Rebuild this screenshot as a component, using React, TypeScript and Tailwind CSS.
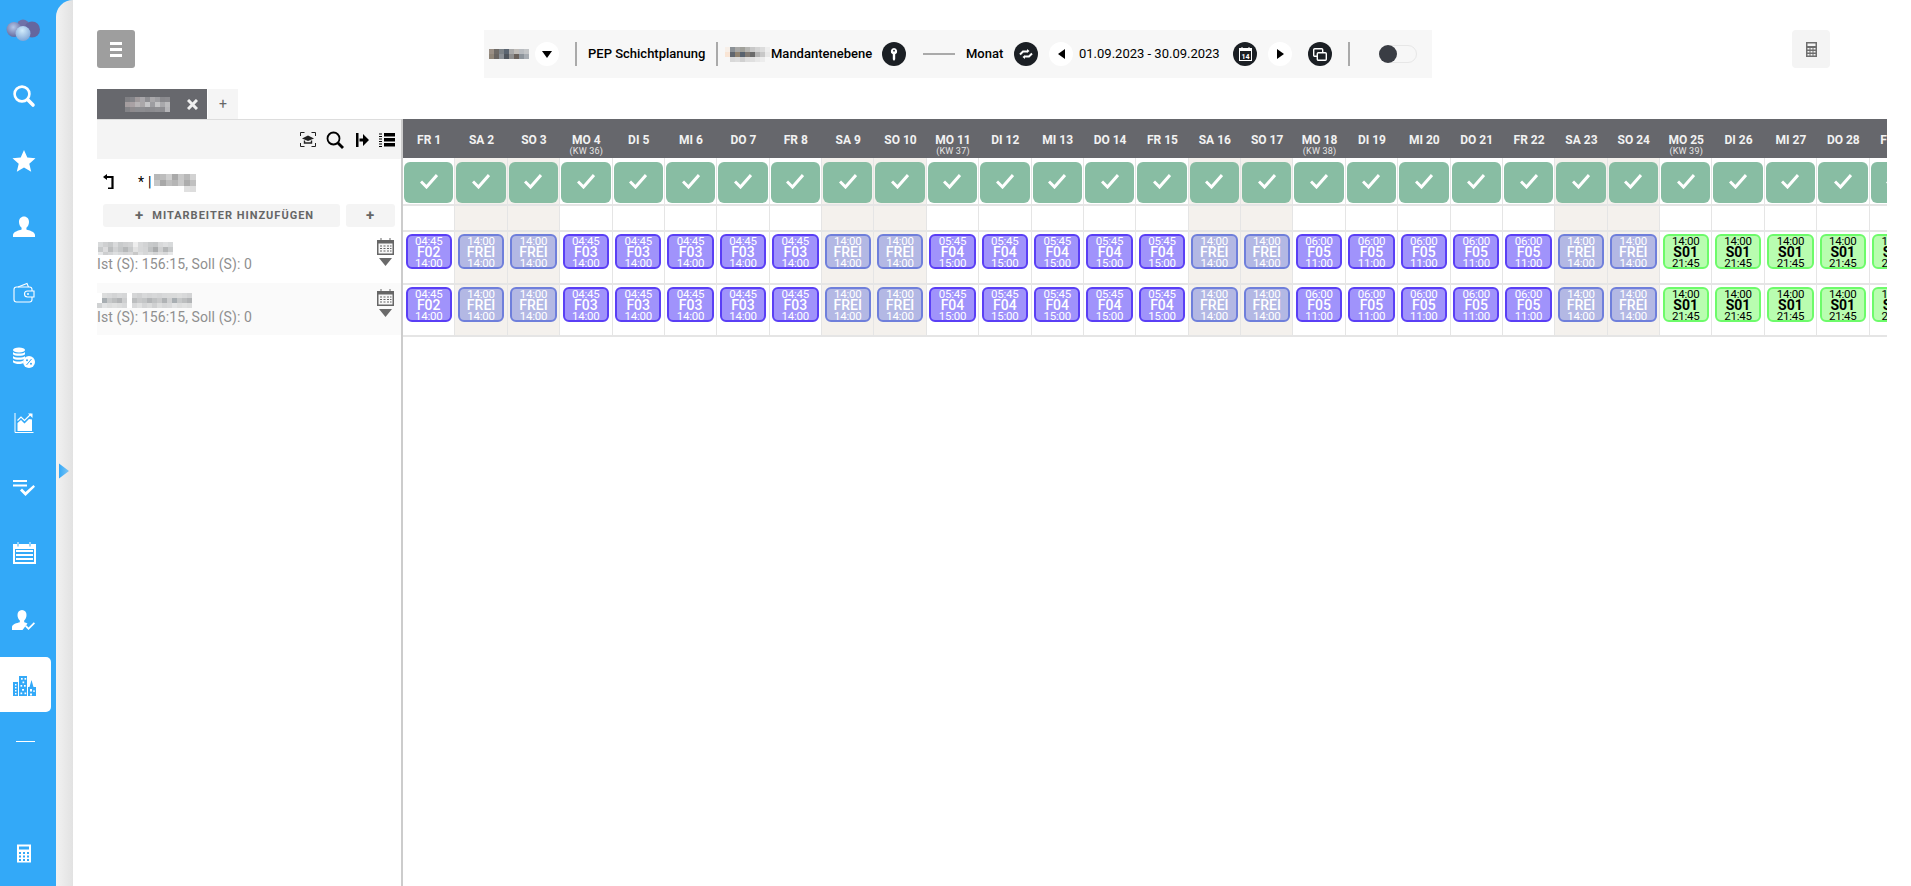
import React from 'react';

type Shift = { from: string; code: string; to: string; kind: 'early' | 'free' | 'late' };

const names = ['FR', 'SA', 'SO', 'MO', 'DI', 'MI', 'DO'];

const shiftFor = (day: number): Shift => {
  const weekday = names[(day - 1) % 7];
  if (weekday === 'SA' || weekday === 'SO') return { from: '14:00', code: 'FREI', to: '14:00', kind: 'free' };
  if (day === 1) return { from: '04:45', code: 'F02', to: '14:00', kind: 'early' };
  if (day <= 8) return { from: '04:45', code: 'F03', to: '14:00', kind: 'early' };
  if (day <= 15) return { from: '05:45', code: 'F04', to: '15:00', kind: 'early' };
  if (day <= 22) return { from: '06:00', code: 'F05', to: '11:00', kind: 'early' };
  return { from: '14:00', code: 'S01', to: '21:45', kind: 'late' };
};

const days = Array.from({ length: 29 }, (_, i) => {
  const day = i + 1;
  const weekday = names[i % 7];
  const kw: Record<number, string> = { 4: '(KW 36)', 11: '(KW 37)', 18: '(KW 38)', 25: '(KW 39)' };
  return { day, label: `${weekday} ${day}`, kw: kw[day], weekend: weekday === 'SA' || weekday === 'SO', shift: shiftFor(day) };
});

// pixelated names from the screenshot
const Mosaic = ({ rows, cell, className }: { rows: string[][]; cell: number; className?: string }) => (
  <svg className={className} width={rows[0].length * cell} height={rows.length * cell}>
    {rows.map((row, y) =>
      row.map((fill, x) => <rect key={`${x}-${y}`} x={x * cell} y={y * cell} width={cell} height={cell} fill={fill} />)
    )}
  </svg>
);

const Logo = () => (
  <svg width="36" height="26" viewBox="0 0 36 26">
    <defs>
      <radialGradient id="ball" cx="45%" cy="35%" r="70%">
        <stop offset="0%" stopColor="#b4c8ea" />
        <stop offset="100%" stopColor="#5f6399" />
      </radialGradient>
      <radialGradient id="ballFront" cx="45%" cy="30%" r="70%">
        <stop offset="0%" stopColor="#d2ecfb" />
        <stop offset="100%" stopColor="#7fa6d8" />
      </radialGradient>
    </defs>
    <circle cx="17" cy="6.5" r="6" fill="#6f71a8" />
    <circle cx="26" cy="10.5" r="8" fill="#65669e" />
    <circle cx="8" cy="10.5" r="7.5" fill="url(#ball)" />
    <circle cx="17" cy="14.5" r="7.5" fill="url(#ballFront)" />
  </svg>
);

const SideIcon = ({ name }: { name: string }) => {
  if (name === 'search')
    return (
      <svg width="24" height="24" viewBox="0 0 24 24" fill="none" stroke="#fff">
        <circle cx="10" cy="10" r="7.4" strokeWidth="2.6" />
        <path d="M15.8 15.8 21 21" strokeWidth="3.6" strokeLinecap="round" />
      </svg>
    );
  if (name === 'star')
    return (
      <svg width="24" height="24" viewBox="0 0 24 24" fill="#fff">
        <path d="M12 1l3.3 7.6 8.2.7-6.2 5.4 1.9 8.1L12 18.6l-7.2 4.2 1.9-8.1L.5 9.3l8.2-.7z" />
      </svg>
    );
  if (name === 'user')
    return (
      <svg width="24" height="24" viewBox="0 0 24 24" fill="#fff">
        <path d="M12 1.5c3 0 5 2.3 5 5.5 0 2.6-1.2 4.8-2.6 5.8v1.6c3 1 8.6 2.2 8.6 5.6v2H1v-2c0-3.4 5.6-4.6 8.6-5.6v-1.6C8.2 11.8 7 9.6 7 7c0-3.2 2-5.5 5-5.5z" />
      </svg>
    );
  if (name === 'wallet')
    return (
      <svg width="22" height="22" viewBox="0 0 22 22" fill="none" stroke="#fff" strokeWidth="1.1">
        <rect x="1" y="5" width="18" height="15" rx="2.5" />
        <path d="M5 5l9-3.5L15.500 5" />
        <path d="M21 9h-6.500a2.500 2.500 0 0 0 0 6H21z" fill="#33a9f8" />
        <circle cx="15" cy="12" r="1" fill="#fff" stroke="none" />
      </svg>
    );
  if (name === 'coins')
    return (
      <svg width="24" height="22" viewBox="0 0 24 22" fill="#fff">
        <ellipse cx="7" cy="3" rx="6" ry="2.5" />
        <path d="M1 5c1.5 2 10.500 2 12 0v2.200c-1.500 2-10.500 2-12 0zM1 9c1.500 2 10.500 2 12 0v2.200c-1.500 2-10.500 2-12 0zM1 13c1.500 2 9 2 10 .5v2.700c-2 1.300-8.500 1-10-1z" />
        <circle cx="17" cy="15" r="6" />
        <path d="M14.500 18l5-6" stroke="#33a9f8" strokeWidth="1" />
        <circle cx="15" cy="13.200" r="1" fill="#33a9f8" />
        <circle cx="19" cy="16.800" r="1" fill="#33a9f8" />
      </svg>
    );
  if (name === 'chart')
    return (
      <svg width="20" height="22" viewBox="0 0 20 22" fill="none" stroke="#fff">
        <path d="M1 1v19.500h18.500" strokeWidth="1" />
        <path d="M3.500 19V11l3.500-3 3.500 3.500L15 7l3 .5V19z" fill="#fff" stroke="none" />
        <path d="M3 9.500l4-3.500 3.500 3.500L17 2.500" strokeWidth="1.400" stroke="#33a9f8" />
        <path d="M3.500 8.500 7 5l3.500 3.500L17 2" strokeWidth="1.200" />
        <path d="M14 1.500h4.500V6z" fill="#fff" stroke="none" />
      </svg>
    );
  if (name === 'tasks')
    return (
      <svg width="24" height="18" viewBox="0 0 24 18" fill="#fff">
        <rect x="1" y="0" width="14" height="2" />
        <rect x="1" y="4.500" width="14" height="2" />
        <path d="M8 10.500l2-2 3.500 3.500L21.500 5l1.500 1.800L13.500 16z" />
      </svg>
    );
  if (name === 'calendar')
    return (
      <svg width="23" height="22" viewBox="0 0 23 22" fill="#fff">
        <path d="M0 2h4V0h2v2h10V0h2v2h5v20H0z" />
        <rect x="2" y="7" width="19" height="13" fill="#33a9f8" />
        <rect x="3" y="8" width="17" height="2" />
        <rect x="3" y="12" width="17" height="2" />
        <rect x="3" y="16" width="17" height="2" />
        <rect x="4.500" y="0" width="1" height="4.500" fill="#33a9f8" />
        <rect x="16.500" y="0" width="1" height="4.500" fill="#33a9f8" />
      </svg>
    );
  if (name === 'userCheck')
    return (
      <svg width="24" height="22" viewBox="0 0 24 22" fill="#fff">
        <path d="M10 0c3 0 4.500 2.200 4.500 5 0 2.300-1 4.300-2.300 5.400v1.800c1 .3 2.200.7 3.300 1.300L10.500 20H0v-3c0-3 5-4 7.800-4.800v-1.800C6.500 9.300 5.500 7.300 5.500 5 5.500 2.200 7 0 10 0z" />
        <path d="M13 16.500l1.300-1.300 2.200 2.200 5.300-5.200 1.200 1.200-6.500 6.600z" />
      </svg>
    );
  if (name === 'city')
    return (
      <svg width="23" height="20" viewBox="0 0 23 20" fill="#33a9f8">
        <path d="M0 6h5v14H0zM6 0h8v20H6zM15 11h1.500l2-7 2 7H23v9h-8z" />
        <g fill="#fff">
          <rect x="2" y="8" width="1.500" height="1.500" /><rect x="2" y="11" width="1.500" height="1.500" />
          <rect x="2" y="14" width="1.500" height="1.500" /><rect x="2" y="17" width="1.500" height="1.500" />
          <rect x="8" y="2" width="1.700" height="1.700" /><rect x="11.500" y="2" width="1.700" height="1.700" />
          <rect x="9.500" y="5.500" width="1.700" height="1.700" /><rect x="7.500" y="9" width="1.700" height="1.700" />
          <rect x="11" y="9" width="1.700" height="1.700" /><rect x="9" y="13" width="2" height="1.700" />
          <rect x="7.500" y="16.500" width="1.700" height="1.700" /><rect x="11.500" y="16.500" width="1.700" height="1.700" />
          <rect x="17" y="13" width="2" height="2.500" /><rect x="17" y="17.500" width="2" height="2" />
          <rect x="20" y="14.500" width="2" height="1.200" />
        </g>
      </svg>
    );
  if (name === 'dash') return <div className="h-px w-[19px] bg-white" />;
  if (name === 'calc')
    return (
      <svg width="14" height="19" viewBox="0 0 14 18" fill="#fff">
        <path d="M0 0h14v18H0zM2 2v3h10V2zM2 7.500v2h2v-2zm4 0v2h2v-2zm4 0v2h2v-2zM2 11v2h2v-2zm4 0v2h2v-2zm4 0v2h2v-2zM2 14.500v2h2v-2zm4 0v2h2v-2zm4 0v2h2v-2z" fillRule="evenodd" />
      </svg>
    );
  return null;
};

const sideItems = [
  { name: 'search', box: 'h-[65px]' },
  { name: 'star', box: 'h-[66px]' },
  { name: 'user', box: 'h-[66px]' },
  { name: 'wallet', box: 'h-[65px]' },
  { name: 'coins', box: 'h-[65px]' },
  { name: 'chart', box: 'h-[66px]' },
  { name: 'tasks', box: 'h-[66px]' },
  { name: 'calendar', box: 'h-[62px]' },
  { name: 'userCheck', box: 'h-[73px]' },
];

const Sidebar = () => (
  <aside className="flex h-full w-14 shrink-0 flex-col">
    <div className="flex h-[63px] items-center justify-center pr-[8px]">
      <Logo />
    </div>
    {sideItems.map((item) => (
      <div key={item.name} className={`flex items-center justify-center pr-[8px] ${item.box}`}>
        <SideIcon name={item.name} />
      </div>
    ))}
    <div className="flex h-[55px] w-[51px] items-center justify-center rounded-r-[5px] bg-white pt-[2px] pr-[3px]">
      <SideIcon name="city" />
    </div>
    <div className="flex h-[58px] items-center justify-center pl-[1px] pr-[7px]">
      <SideIcon name="dash" />
    </div>
    <div className="mt-auto flex h-[66px] items-center justify-center pr-[8px]">
      <SideIcon name="calc" />
    </div>
  </aside>
);

const Round = ({ dark = false, children }: { dark?: boolean; children: React.ReactNode }) => (
  <div className={`flex h-6 w-6 shrink-0 items-center justify-center rounded-full ${dark ? 'bg-[#1b1f24]' : 'bg-white'}`}>
    {children}
  </div>
);

const Separator = () => <div className="h-6 w-[2px] shrink-0 bg-[#aaaaaa]" />;

const Arrow = ({ dir }: { dir: 'down' | 'left' | 'right' }) => {
  if (dir === 'down') return <svg width="10" height="7" viewBox="0 0 10 7"><path d="M0 0h10L5 7z" fill="#000" /></svg>;
  if (dir === 'left') return <svg width="7" height="10" viewBox="0 0 7 10"><path d="M7 0v10L0 5z" fill="#000" /></svg>;
  return <svg width="7" height="10" viewBox="0 0 7 10"><path d="M0 0v10l7-5z" fill="#000" /></svg>;
};

const TopBar = () => (
  <div className="flex h-12 w-[948px] shrink-0 items-center bg-[#f7f7f7] text-[13px] font-medium text-black">
    <Mosaic
      className="ml-[5px]"
      cell={5}
      rows={[
        ['#9a8f85', '#6e6a66', '#7c8287', '#5a6470', '#a9a9a9', '#c0bdb9', '#b9bcc0', '#c3c5c7'],
        ['#8f8578', '#696562', '#8b9096', '#50565e', '#8f8f8f', '#6a625c', '#8d949b', '#a8adb3'],
      ]}
    />
    <div className="ml-[6px]">
      <Round><Arrow dir="down" /></Round>
    </div>
    <div className="ml-4"><Separator /></div>
    <span className="ml-[11px] w-[117px] whitespace-nowrap">PEP Schichtplanung</span>
    <div className="ml-[11px]"><Separator /></div>
    <Mosaic
      className="ml-[7px]"
      cell={5}
      rows={[
        ['#f7efe8', '#8b9196', '#a8a8a6', '#a0a09a', '#b5b5b2', '#c8c8c8', '#d4d4d4', '#dcdcdc', '#eeeeee'],
        ['#f9e5d5', '#60666e', '#8f8270', '#58626e', '#807a74', '#6a6a6a', '#b2b2b2', '#c8c8c8', '#e8e8e8'],
        ['#f7f7f7', '#d8d8d8', '#dcdcdc', '#d0d0d0', '#dedede', '#e0e0e0', '#e8e8e8', '#ededed', '#f7f7f7'],
      ]}
    />
    <span className="ml-[1px] w-[101px] whitespace-nowrap">Mandantenebene</span>
    <div className="ml-[10px]">
      <Round dark>
        <svg width="8" height="15" viewBox="0 0 10 16" fill="#fff">
          <path d="M5 0a4 4 0 0 1 1.500 7.700V14L5 16l-1.500-2V7.700A4 4 0 0 1 5 0z" />
          <circle cx="5" cy="3.200" r="1.100" fill="#1b1f24" />
        </svg>
      </Round>
    </div>
    <div className="ml-[17px] h-[2px] w-8 bg-[#aaaaaa]" />
    <span className="ml-[11px] w-[37px]">Monat</span>
    <div className="ml-[11px]">
      <Round dark>
        <svg width="14" height="10" viewBox="0 0 14 10" fill="none" stroke="#fff" strokeWidth="2">
          <path d="M1 5.500 4 2.500h4M13 4.500 10 7.500H6" />
          <path d="M8 0v4l2.500-2zM6 10V6L3.500 8z" fill="#fff" stroke="none" />
        </svg>
      </Round>
    </div>
    <div className="ml-[11px]">
      <Round><Arrow dir="left" /></Round>
    </div>
    <span className="ml-[6px] w-[143px] whitespace-nowrap font-normal">01.09.2023 - 30.09.2023</span>
    <div className="ml-[11px]">
      <Round dark>
        <svg width="13" height="14" viewBox="0 0 13 14" fill="none" stroke="#fff">
          <rect x="0.500" y="1.500" width="12" height="12" strokeWidth="1" />
          <rect x="0" y="1" width="13" height="3" fill="#fff" stroke="none" />
          <path d="M3 0v2M10 0v2" strokeWidth="1" />
          <text x="6.500" y="12" fontSize="7" fontWeight="700" textAnchor="middle" fill="#fff" stroke="none" fontFamily="Roboto, sans-serif">14</text>
        </svg>
      </Round>
    </div>
    <div className="ml-[11px]">
      <Round><Arrow dir="right" /></Round>
    </div>
    <div className="ml-4">
      <Round dark>
        <svg width="14" height="13" viewBox="0 0 14 13" fill="none" stroke="#fff" strokeWidth="1.400">
          <rect x="0.700" y="0.700" width="9" height="7.500" rx="1" />
          <rect x="4.300" y="4.800" width="9" height="7.500" rx="1" fill="#1b1f24" />
        </svg>
      </Round>
    </div>
    <div className="ml-4"><Separator /></div>
    <div className="ml-[29px] flex h-[18px] w-[38px] items-center rounded-full border border-[#e7e7e7]">
      <div className="-ml-px h-[18px] w-[18px] rounded-full bg-[#3a3d44]" />
    </div>
  </div>
);

const Header = () => (
  <div className="flex h-[89px] shrink-0 items-start pt-[30px]">
    <div className="flex h-[38px] w-[38px] shrink-0 flex-col items-center justify-center gap-[3px] rounded-[3px] bg-[#9e9e9e]">
      <div className="h-[3px] w-[12px] bg-white" />
      <div className="h-[3px] w-[12px] bg-white" />
      <div className="h-[3px] w-[12px] bg-white" />
    </div>
    <div className="ml-[349px]">
      <TopBar />
    </div>
    <div className="ml-[360px] flex h-[38px] w-[38px] shrink-0 items-center justify-center rounded-[4px] bg-[#f4f4f4]">
      <svg width="11" height="15" viewBox="0 0 11 15" fill="#6e6e6e">
        <path d="M0 0h11v15H0zM1.500 1.500V4h8V1.500zM1.500 6v1.500h2V6zm3 0v1.500h2V6zm3 0v1.500h2V6zM1.500 9v1.500h2V9zm3 0v1.500h2V9zm3 0v1.500h2V9zM1.500 12v1.500h2V12zm3 0v1.500h2V12zm3 0v1.500h2V12z" fillRule="evenodd" />
      </svg>
    </div>
  </div>
);

const Tabs = () => (
  <div className="flex h-[30px] shrink-0 gap-px">
    <div className="flex w-[110px] items-center bg-[#67686d] pl-[28px]">
      <Mosaic
        cell={5}
        rows={[
          ['#808084', '#85858a', '#a09a9c', '#a8a6aa', '#8f8f93', '#a9a8ab', '#9e9ea2', '#8a8a8e', '#8c8c90'],
          ['#a49d9f', '#a9a1a4', '#b7b3b5', '#aaa7a9', '#c5c5c7', '#9d9da1', '#c4c4c6', '#a8a8ab', '#bbbbbd'],
          ['#838387', '#8e8a8d', '#8c8c90', '#8d8d91', '#8a8a8e', '#8c8c90', '#8f8f93', '#8d8d91', '#b5b5b8'],
        ]}
      />
      <svg className="ml-[17px]" width="11" height="11" viewBox="0 0 11 11" stroke="#f0f0f0" strokeWidth="3">
        <path d="M1 1l9 9M10 1l-9 9" />
      </svg>
    </div>
    <div className="flex w-[30px] items-center justify-center bg-[#f5f5f5] text-sm text-[#666]">+</div>
  </div>
);

const Toolbar = () => (
  <div className="flex h-[40px] shrink-0 items-center justify-end border-t border-[#dddddd] bg-[#f4f4f4] pr-[6px]">
    <svg width="16" height="15" viewBox="0 0 16 15" fill="none" stroke="#222" strokeWidth="1">
      <path d="M.5 4V.5h4M11.500.5h4V4M15.500 11v3.500h-4M4.500 14.500h-4V11" />
      <path d="M8 3.500 14 6.500 8 9 2 6.500z" fill="#222" stroke="none" />
      <path d="M4.500 8.500V11h7V8.500" strokeWidth="1.400" />
    </svg>
    <svg className="ml-[10px]" width="18" height="18" viewBox="0 0 18 18" fill="none" stroke="#000">
      <circle cx="7.500" cy="7.500" r="6" strokeWidth="1.800" />
      <path d="M12 12l5 5" strokeWidth="2.800" />
    </svg>
    <svg className="ml-[12px]" width="13" height="14" viewBox="0 0 13 14" fill="#000">
      <path d="M0 0h2.500v14H0zM3.500 5.500H7V1l6 6-6 6V8.500H3.500z" />
    </svg>
    <svg className="ml-[10px]" width="16" height="14" viewBox="0 0 16 14" fill="#000">
      <path d="M5 0h11v3.500H5zM5 5h11v3.500H5zM5 10h11v3.500H5z" />
      <path d="M0 .5h3v1H0zM0 3h3v1H0zM0 5.500h3v1H0zM0 8h3v1H0zM0 10.500h3v1H0zM0 13h3v1H0z" />
    </svg>
  </div>
);

const nameLeft = [
  ['#d8dadb', '#cfd0d1', '#c7c9ca', '#d9dadb', '#c9cbcc', '#cfd0d1', '#d2d3d4', '#eeeeee', '#d8d9da', '#d2d3d4', '#c8cacb', '#c5c7c8', '#d8d9da', '#dedfe0', '#d8dadb'],
  ['#c8cacb', '#dcdcdd', '#bbbdbe', '#d1d2d3', '#c5c7c8', '#b6b8b9', '#c8cacb', '#e2e2e2', '#d7d8d9', '#d4d5d6', '#c0c2c3', '#aaacad', '#cfd0d1', '#b5b7b8', '#c8cacb'],
  ['#e6e7e8', '#cdcecf', '#d4d5d6', '#dedfe0', '#d8d9da', '#d4d5d6', '#d8d8d9', '#c8c8c8', '#dedfe0', '#d6d7d8', '#dcdddd', '#d3d4d5', '#dedede', '#d8d9da', '#e6e7e8'],
];
const nameRight = [
  ['#ffffff', '#dcdddd', '#d8d9da', '#d3d4d5', '#d8d9da', '#d5d6d7', '#ffffff', '#d5d6d7', '#d0d1d2', '#d8d9da', '#d4d5d6', '#d7d8d9', '#d4d5d6', '#d8d9da', '#d9dada', '#d9dada', '#dcdddd', '#d8d9da', '#d3d4d5'],
  ['#ffffff', '#a8aeb2', '#c6c8c9', '#bcbebf', '#b2b4b6', '#cdcecf', '#ffffff', '#bcbebf', '#c8c9ca', '#c3c5c6', '#b3b5b7', '#bfc1c2', '#c8c9ca', '#b0b3b5', '#cfd0d1', '#a8aeb2', '#c6c8c9', '#bcbebf', '#b2b4b6'],
  ['#d0d2d3', '#e2e3e4', '#dcdddd', '#e0e1e1', '#dcdddd', '#d8d9da', '#ffffff', '#d8d9da', '#e0e1e1', '#d4d5d6', '#dadbdb', '#cfd0d1', '#dcdddd', '#d5d6d7', '#d8d9da', '#e2e3e4', '#dcdddd', '#e0e1e1', '#dcdddd'],
];

const EmployeeRow = ({ rows, shaded }: { rows: string[][]; shaded?: boolean }) => (
  <div className={`flex shrink-0 justify-between pr-[7px] ${shaded ? 'h-[52px] bg-[#fafafa]' : 'h-[51px]'}`}>
    <div className="flex flex-col pt-[10px]">
      <Mosaic rows={rows} cell={5} className={shaded ? 'ml-0' : 'ml-px h-[13px]'} />
      <span className="-mt-px whitespace-nowrap text-sm leading-[20px] tracking-[0.1px] text-[#8f8f8f]">
        Ist (S): 156:15, Soll (S): 0
      </span>
    </div>
    <div className="flex flex-col items-center pt-[6px]">
      <svg width="17" height="17" viewBox="0 0 17 17" fill="#666">
        <path d="M0 2h3.500V0h1v2h8V0h1v2H17v15H0z" />
        <path d="M1.500 5.500h14v10h-14z" fill="#f7f7f7" />
        <path d="M3 7.500h2v1H3zm3.500 0h2v1h-2zm3.500 0h2v1h-2zm3 0h1.500v1H13zM3 10h2v1H3zm3.500 0h2v1h-2zm3.500 0h2v1h-2zm3 0h1.500v1H13zM3 12.500h2v1H3zm3.500 0h2v1h-2zm3.500 0h2v1h-2zm3 0h1.500v1H13z" />
      </svg>
      <svg className="mt-[3px]" width="13" height="8" viewBox="0 0 13 8"><path d="M0 0h13L6.500 8z" fill="#6a6a6a" /></svg>
    </div>
  </div>
);

const LeftPanel = () => (
  <div className="flex h-full w-[306px] shrink-0 flex-col border-r-2 border-[#cccccc]">
    <Toolbar />
    <div className="flex h-[45px] shrink-0 items-center pl-[6px]">
      <svg width="11" height="15" viewBox="0 0 11 15" fill="none" stroke="#000">
        <path d="M3 3h6.500v11.500H5" strokeWidth="2.200" />
        <path d="M0 3l4-3v6z" fill="#000" stroke="none" />
      </svg>
      <span className="ml-[24px] text-sm leading-none text-black">*</span>
      <span className="ml-[4px] text-sm leading-none text-black">|</span>
      <Mosaic
        className="ml-[3px] mt-[3px]"
        cell={6}
        rows={[
          ['#b8b8b8', '#bdbdbd', '#cfcfcf', '#a9a9a9', '#c8c8c8', '#b8b8b8', '#d2d2d2'],
          ['#c7c7c7', '#a8a8a8', '#bebebe', '#b5b5b5', '#c9c9c9', '#acacac', '#c0c0c0'],
          ['#ffffff', '#ffffff', '#ffffff', '#ffffff', '#ffffff', '#e0e0e0', '#dddddd'],
        ]}
      />
    </div>
    <div className="flex h-[23px] shrink-0 gap-[6px] pl-[6px] pr-[6px] text-[11px] font-bold tracking-[1px] text-[#666]">
      <div className="flex w-[238px] items-center justify-center gap-2 rounded-[3px] bg-[#f4f4f4] pl-[6px]">
        <span className="text-[15px] leading-none">+</span>
        <span className="mt-[2px]">MITARBEITER HINZUFÜGEN</span>
      </div>
      <div className="flex w-[49px] items-center justify-center rounded-[3px] bg-[#f4f4f4]">
        <span className="text-[15px] leading-none">+</span>
      </div>
    </div>
    <div className="mt-[5px]" />
    <EmployeeRow rows={nameLeft} />
    <EmployeeRow rows={nameRight} shaded />
  </div>
);

const tileStyles = {
  early: 'border-[#5a3ff5] bg-[#a093fb] text-white',
  free: 'border-[#6f7fdb] bg-[#b3b8e4] text-white',
  late: 'border-[#6dfb6a] bg-[#b9fdb0] text-black',
};

const Tile = ({ shift }: { shift: Shift }) => (
  <div
    className={`mx-[2.5px] mt-[2px] flex h-[35px] flex-col items-center justify-center overflow-hidden rounded-[6px] border-2 pt-px text-[11.5px] leading-[11px] tracking-[-0.25px] ${tileStyles[shift.kind]}`}
  >
    <span>{shift.from}</span>
    <span className={`text-sm leading-[11px] tracking-normal ${shift.kind === 'late' ? 'font-bold' : 'font-medium'}`}>{shift.code}</span>
    <span>{shift.to}</span>
  </div>
);

const Plan = () => (
  <div className="min-w-0 flex-1 overflow-hidden">
    <div className="flex h-[39px] w-max bg-[#66676c]">
      {days.map((d) => (
        <div key={d.day} className="flex w-[52.375px] shrink-0 flex-col items-center pt-[15px] text-white">
          <span className="text-xs font-bold leading-[13px] text-[#f2f2f2]">{d.label}</span>
          {d.kw && <span className="text-[9px] leading-[9px] tracking-[0.2px] text-[#e6e6e6]">{d.kw}</span>}
        </div>
      ))}
    </div>
    <div className="flex h-[48px] w-max border-b-2 border-[#e5e5e5]">
      {days.map((d) => (
        <div key={d.day} className={`w-[52.375px] shrink-0 border-r border-[#e5e5e5] px-px pt-[4px] ${d.weekend ? 'bg-[#f4f1ed]' : ''}`}>
          <div className="flex h-[41px] items-center justify-center rounded-[6px] bg-[#88bda3] pb-[2px]">
            <svg width="18" height="15" viewBox="0 0 18 15" fill="none" stroke="#fff" strokeWidth="3">
              <path d="M1 7.500 6.500 13 17 1" />
            </svg>
          </div>
        </div>
      ))}
    </div>
    <div className="flex h-[26px] w-max border-b-2 border-[#e5e5e5]">
      {days.map((d) => (
        <div key={d.day} className={`w-[52.375px] shrink-0 border-r border-[#e5e5e5] ${d.weekend ? 'bg-[#f4f1ed]' : ''}`} />
      ))}
    </div>
    {['h-[53px]', 'h-[52px]'].map((height) => (
      <div key={height} className={`flex w-max border-b-2 border-[#e5e5e5] ${height}`}>
        {days.map((d) => (
          <div key={d.day} className={`w-[52.375px] shrink-0 border-r border-[#e5e5e5] ${d.weekend ? 'bg-[#f4f1ed]' : ''}`}>
            <Tile shift={d.shift} />
          </div>
        ))}
      </div>
    ))}
  </div>
);

export default function App() {
  return (
    <div className="relative flex h-[886px] w-full overflow-hidden bg-[#33a9f8] font-['Roboto',sans-serif]">
      <Sidebar />
      <div className="relative w-[17px] shrink-0 rounded-tl-[17px] bg-gradient-to-r from-[#f2f2f2] to-[#e2e2e2]">
        <svg className="absolute left-[3px] top-[463px]" width="10" height="16" viewBox="0 0 10 15">
          <defs>
            <linearGradient id="side" x1="0" x2="1" y1="0" y2="0">
              <stop offset="0%" stopColor="#33a9f8" />
              <stop offset="100%" stopColor="#7fc4f2" />
            </linearGradient>
          </defs>
          <path d="M0 0l10 7.500L0 15z" fill="url(#side)" />
        </svg>
      </div>
      <main className="flex min-w-0 flex-1 flex-col bg-white pl-6 pr-6">
        <Header />
        <Tabs />
        <div className="flex min-h-0 flex-1">
          <LeftPanel />
          <Plan />
        </div>
      </main>
    </div>
  );
}
